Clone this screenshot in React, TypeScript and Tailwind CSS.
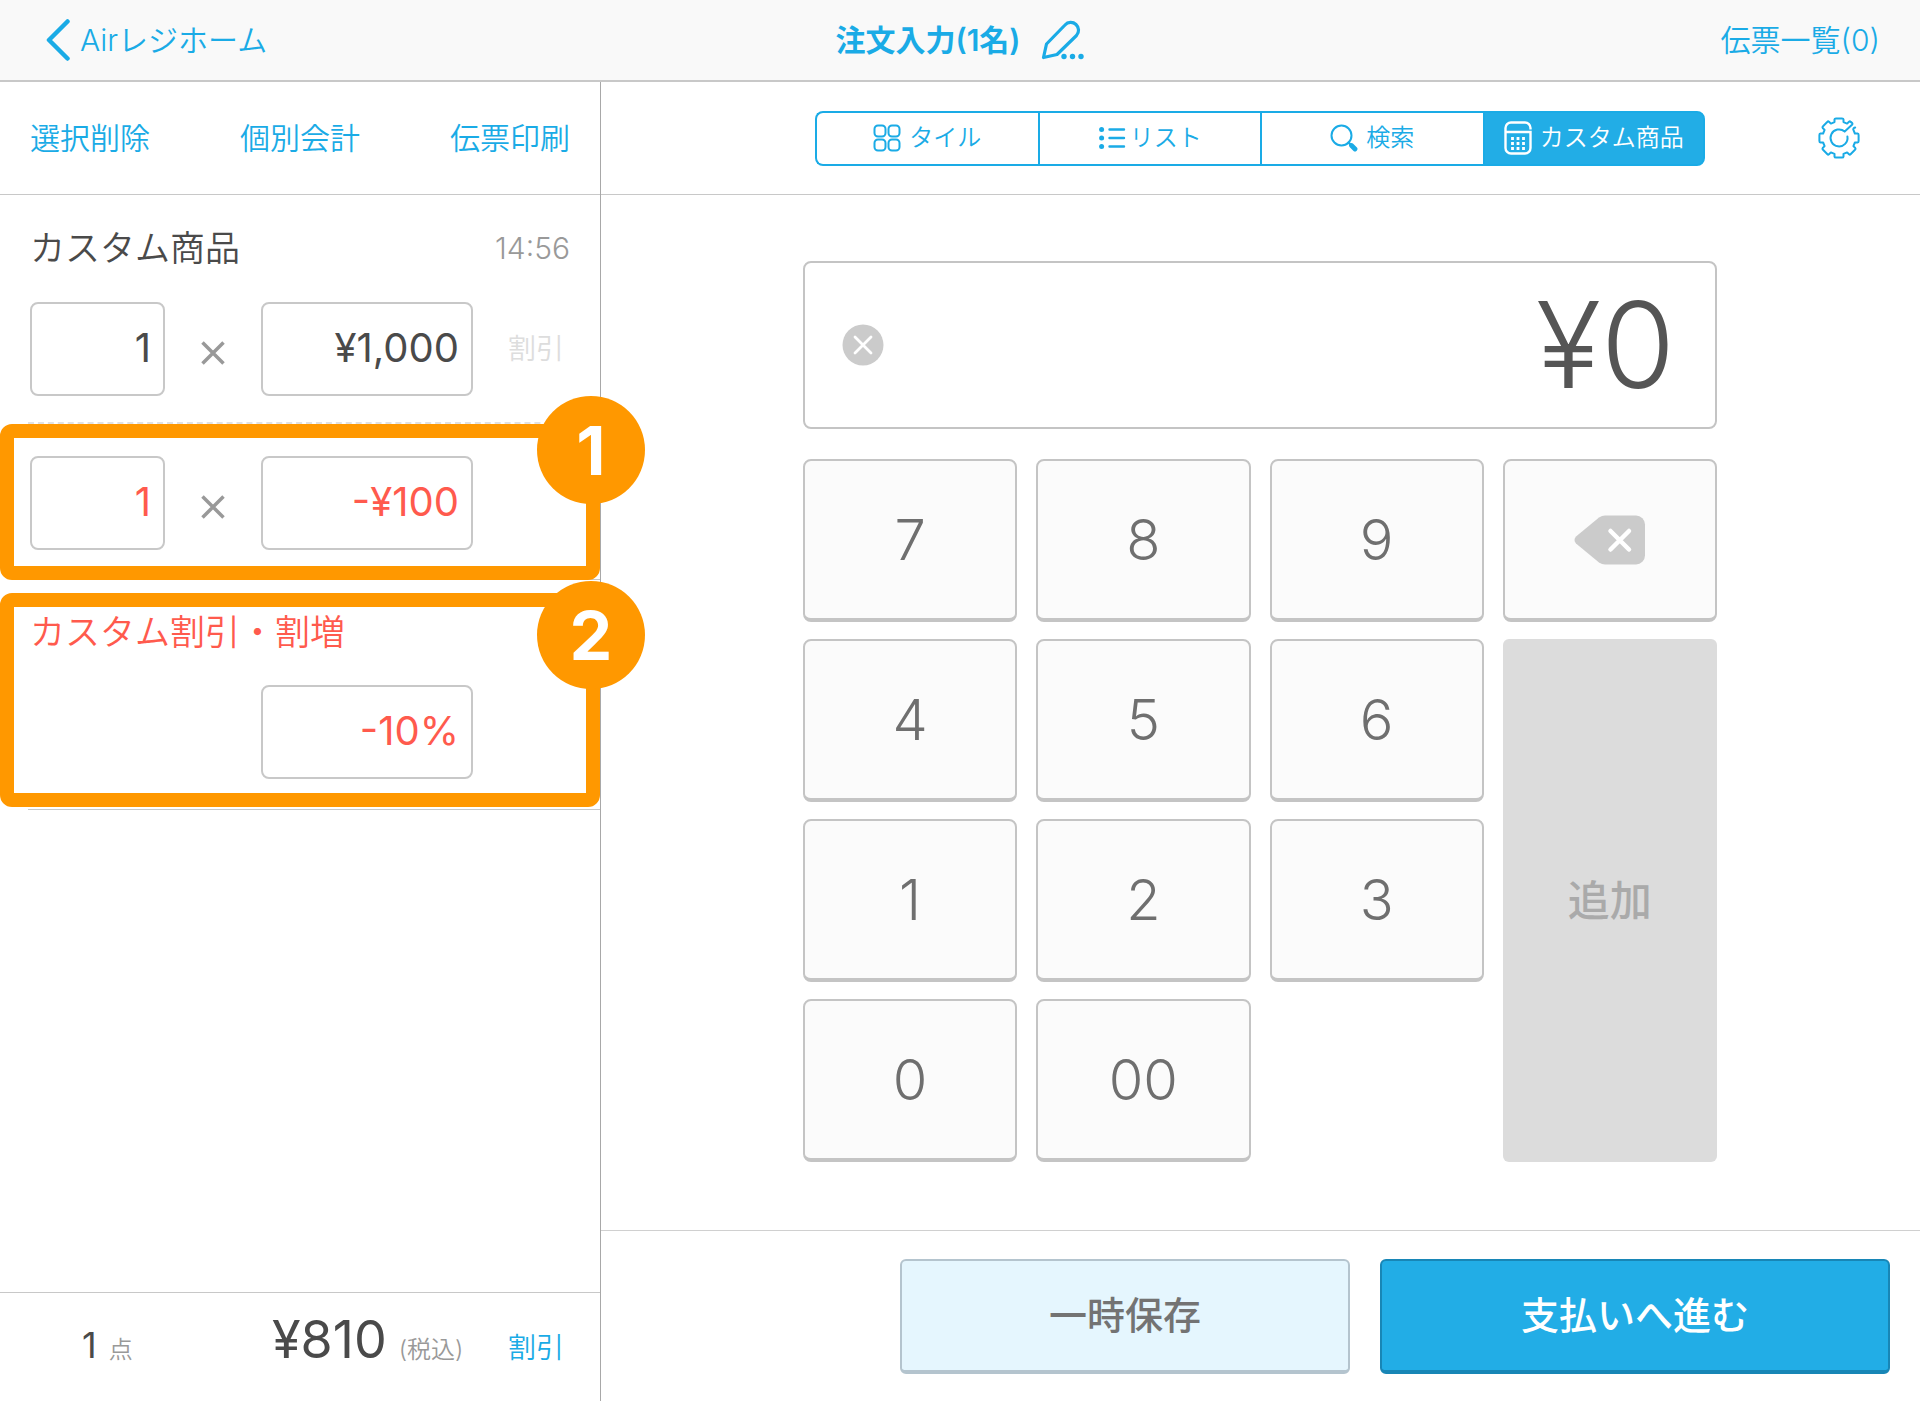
import React, { useState } from 'react';
import clsx from 'clsx';

type TabId = 'tile' | 'list' | 'search' | 'custom';

const TileIcon = () => (
  <svg className="size-7" viewBox="0 0 28 28" fill="none" stroke="currentColor" strokeWidth="2">
    <rect x="1.5" y="1.5" width="11" height="11" rx="3.5" />
    <rect x="15.5" y="1.5" width="11" height="11" rx="3.5" />
    <rect x="1.5" y="15.5" width="11" height="11" rx="3.5" />
    <rect x="15.5" y="15.5" width="11" height="11" rx="3.5" />
  </svg>
);

const ListIcon = () => (
  <svg className="size-7" viewBox="0 0 28 28" stroke="currentColor" strokeWidth="2.4" strokeLinecap="round">
    <path d="M11.500 5.500H26M11.500 14H26M11.500 22.500H26" />
    <g fill="currentColor" stroke="none">
      <circle cx="3.6" cy="5.5" r="2.5" />
      <circle cx="3.6" cy="14" r="2.5" />
      <circle cx="3.6" cy="22.5" r="2.5" />
    </g>
  </svg>
);

const SearchIcon = () => (
  <svg className="size-7" viewBox="0 0 28 28" fill="none" stroke="currentColor" strokeLinecap="round">
    <circle cx="11.5" cy="11.5" r="10" strokeWidth="2" />
    <path d="M18.500 18.500l2 2" strokeWidth="2.4" />
    <path d="M21.500 21.500l3.500 3.500" strokeWidth="4.8" />
  </svg>
);

const CalcIcon = () => (
  <svg className="h-9 w-7" viewBox="0 0 28 36" fill="none" stroke="currentColor" strokeWidth="2.4">
    <path d="M26.500 9.500V8a5.500 5.500 0 0 0-5.500-5.500H7A5.500 5.500 0 0 0 1.500 8v20A5.500 5.500 0 0 0 7 33.500h14a5.500 5.500 0 0 0 5.500-5.500V12h-25" />
    <path
      d="M8.500 18.500h.01M14 18.500h.01M19.500 18.500h.01M8.500 23.500h.01M14 23.500h.01M19.500 23.500h.01M8.500 28.500h.01M14 28.500h.01M19.500 28.500h.01"
      strokeWidth="2.800"
      strokeLinecap="square"
    />
  </svg>
);

const PencilIcon = () => (
  <svg className="h-10 w-11" viewBox="0 0 44 40" fill="none" stroke="currentColor" strokeWidth="3.2" strokeLinejoin="round">
    <path d="M2.500 37.500L5.500 24 24 5a7.600 7.600 0 0 1 11.500 10.500L16 34.500z" />
    <g fill="currentColor" stroke="none">
      <circle cx="23" cy="36.500" r="2.700" />
      <circle cx="31.500" cy="36.500" r="2.700" />
      <circle cx="40" cy="36.500" r="2.700" />
    </g>
  </svg>
);

const GearIcon = () => (
  <svg className="size-[42px]" viewBox="0 0 42 42" fill="none" stroke="currentColor" strokeWidth="2" strokeLinejoin="round" strokeLinecap="round">
    <path d="M37.200 10.500Q34.600 11.400 35.400 12.900L36.900 16.500L39.600 16.500Q40.600 16.600 40.600 18V24Q40.600 25.400 39.600 25.500L36.900 25.500L35.400 29.100L37.300 31Q38 31.900 37 32.800L32.800 37Q31.900 38 31 37.300L29.100 35.400L25.500 36.900V39.600Q25.400 40.600 24 40.600H18Q16.600 40.600 16.500 39.600V36.900L12.900 35.400L11 37.300Q10.100 38 9.200 37L5 32.800Q4 31.900 4.700 31L6.600 29.100L5.100 25.500H2.400Q1.400 25.400 1.400 24V18Q1.400 16.600 2.400 16.500H5.100L6.600 12.900L4.700 11Q4 10.100 5 9.200L9.200 5Q10.100 4 11 4.700L12.900 6.600L16.500 5.100V2.400Q16.600 1.400 18 1.400H24Q25.400 1.400 25.500 2.400V5.100L29.100 6.600L31 4.700Q31.900 4 32.800 5Q35.400 6.400 34 7.800L26.700 14.600A8.500 8.500 0 1 0 29.400 19.500" />
  </svg>
);

const TABS: { id: TabId; label: string; icon: React.ReactNode; gap: string }[] = [
  { id: 'tile', label: 'タイル', icon: <TileIcon />, gap: 'gap-2' },
  { id: 'list', label: 'リスト', icon: <ListIcon />, gap: 'gap-1' },
  { id: 'search', label: '検索', icon: <SearchIcon />, gap: 'gap-2' },
  { id: 'custom', label: 'カスタム商品', icon: <CalcIcon />, gap: 'gap-2' },
];

const Cross = () => (
  <div className="flex h-[102px] items-center justify-center text-[#999]">
    <svg className="size-6" viewBox="0 0 24 24" stroke="currentColor" strokeWidth="3.500" aria-label="×">
      <path d="M1.500 1.500l21 21M22.500 1.500l-21 21" />
    </svg>
  </div>
);

interface AmountFieldProps {
  label: string;
  value: string;
  discount?: boolean;
  className?: string;
}

const AmountField: React.FC<AmountFieldProps> = ({ label, value, discount = false, className }) => (
  <input
    type="text"
    aria-label={label}
    defaultValue={value}
    className={clsx(
      'h-[94px] w-full rounded-lg border-2 border-[#c8c8c8] bg-white pr-3 pb-1 text-right text-[40px] font-normal',
      discount ? 'text-[#ff5a4d]' : 'text-[#4a4a4a]',
      className
    )}
  />
);

interface CalloutProps {
  no: number;
  className: string;
  badgeClass: string;
}

// Cadre orange numéroté
const Callout: React.FC<CalloutProps> = ({ no, className, badgeClass }) => (
  <div className={clsx('pointer-events-none absolute left-0 w-full rounded-xl border-14 border-[#ff9800]', className)}>
    <span
      className={clsx(
        'absolute -right-[59px] flex size-[108px] items-center justify-center rounded-full bg-[#ff9800] text-[68px] font-bold text-white',
        badgeClass
      )}
    >
      {no}
    </span>
  </div>
);

const rowGrid = 'grid grid-cols-[135px_96px_212px_1fr] items-start';
const keyClass =
  'flex items-center justify-center rounded-lg border-2 border-b-4 border-[#c4c4c4] bg-[#fbfbfb] text-[56px] font-light text-[#6f6f6f]';

const App: React.FC = () => {
  const [tab, setTab] = useState<TabId>('custom');

  return (
    <div className="flex min-h-screen flex-col bg-white font-['Inter','Noto_Sans_CJK_JP',sans-serif] font-[350] text-[#4a4a4a]">
      <header className="grid h-[82px] grid-cols-[1fr_auto_1fr] items-center border-b-2 border-[#c8c8c8] bg-[#f9f9f9] text-[#1aabe6]">
        <a href="#home" className="ml-[46px] flex items-center gap-[10px] text-[30px]">
          <svg className="h-[42px] w-6" viewBox="0 0 24 42" fill="none" stroke="currentColor" strokeWidth="4.500" strokeLinecap="round" strokeLinejoin="round">
            <path d="M21.500 2.500L3 21l18.500 18.500" />
          </svg>
          Airレジホーム
        </a>
        <button type="button" className="flex items-center gap-5 text-[30px] font-semibold">
          注文入力(1名)
          <PencilIcon />
        </button>
        <a href="#slips" className="mr-10 justify-self-end text-[30px]">
          伝票一覧(0)
        </a>
      </header>

      <div className="flex flex-1">
        <aside className="relative flex w-[600px] shrink-0 flex-col shadow-[1px_0_0_#a8a8a8]">
          <div className="flex h-[113px] items-center justify-between border-b border-[#c8c8c8] px-[30px] text-[30px] text-[#1aabe6]">
            <button type="button">選択削除</button>
            <button type="button">個別会計</button>
            <button type="button">伝票印刷</button>
          </div>

          <div className="pl-7">
            <div className="flex h-[107px] items-center justify-between pr-[30px] pl-[2px]">
              <h2 className="text-[35px]">カスタム商品</h2>
              <time className="text-[30px] text-[#999]">14:56</time>
            </div>
            <div className={clsx(rowGrid, 'h-[122px] border-b-2 border-dashed border-[#e2e2e2] pl-[2px]')}>
              <AmountField label="数量" value="1" />
              <Cross />
              <AmountField label="単価" value="¥1,000" />
              <button type="button" disabled className="mr-9 h-[94px] justify-self-end text-[28px] text-[#ddd]">
                割引
              </button>
            </div>
            <div className={clsx(rowGrid, 'h-[156px] border-b border-[#c8c8c8] pt-8 pl-[2px]')}>
              <AmountField label="値引数量" value="1" discount />
              <Cross />
              <AmountField label="値引額" value="-¥100" discount />
            </div>
            <div className="h-[230px] border-b border-[#c8c8c8] pl-[2px]">
              <h2 className="flex h-[105px] items-center text-[35px] text-[#ff5a4d]">カスタム割引・割増</h2>
              <div className={rowGrid}>
                <AmountField label="割引率" value="-10%" discount className="col-start-3" />
              </div>
            </div>
          </div>

          <div className="mt-auto flex h-[109px] items-baseline border-t border-[#c8c8c8] pt-2 font-normal">
            <p className="w-[272px] pl-[82px] text-[36px]">
              1<span className="ml-3 text-[24px] font-[350] text-[#999]">点</span>
            </p>
            <p className="flex-1 text-[52px]">
              ¥810<span className="ml-3 text-[24px] font-[350] text-[#999]">(税込)</span>
            </p>
            <button type="button" className="mr-9 text-[28px] font-[350] text-[#1aabe6]">
              割引
            </button>
          </div>

          <Callout no={1} className="top-[342px] h-[156px]" badgeClass="-top-[42px]" />
          <Callout no={2} className="top-[511px] h-[214px]" badgeClass="-top-[26px]" />
        </aside>

        <main className="flex min-w-0 flex-1 flex-col">
          <div className="grid h-[113px] grid-cols-[1fr_890px_1fr] items-center border-b border-[#c8c8c8] text-[#1aabe6]">
            <div role="tablist" className="col-start-2 grid h-[55px] grid-cols-4">
              {TABS.map(({ id, label, icon, gap }) => (
                <button
                  key={id}
                  type="button"
                  role="tab"
                  aria-selected={tab === id}
                  onClick={() => setTab(id)}
                  className={clsx(
                    'flex items-center justify-center border-y-2 border-l-2 border-[#1aabe6] text-[24px] first:rounded-l-lg last:rounded-r-lg last:border-r-2',
                    gap,
                    tab === id && 'bg-[#22ade6] text-white'
                  )}
                >
                  {icon}
                  {label}
                </button>
              ))}
            </div>
            <button type="button" aria-label="設定" className="mr-[60px] justify-self-end">
              <GearIcon />
            </button>
          </div>

          <div className="mx-auto w-[914px] pt-[66px]">
            <div className="flex h-[168px] items-center justify-between rounded-lg border-2 border-[#c4c4c4] pr-10 pl-[37px]">
              <button type="button" aria-label="クリア">
                <svg className="size-[42px]" viewBox="0 0 42 42">
                  <circle cx="21" cy="21" r="20.500" fill="#cbcbcb" />
                  <path d="M13 13l16 16M29 13L13 29" stroke="#fff" strokeWidth="2.800" strokeLinecap="round" />
                </svg>
              </button>
              <output className="text-[120px] leading-none text-[#555]">¥0</output>
            </div>

            <div className="mt-[30px] grid auto-rows-[163px] grid-cols-4 gap-x-[19px] gap-y-[17px]">
              {['7', '8', '9'].map((k) => (
                <button key={k} type="button" className={keyClass}>{k}</button>
              ))}
              <button type="button" aria-label="一文字削除" className={keyClass}>
                <svg className="h-[50px] w-[72px]" viewBox="0 0 72 50">
                  <path d="M25 2.500Q28 .5 31 .5H62a9 9 0 0 1 9 9v31a9 9 0 0 1-9 9H31Q28 49.500 25 47.500L2 28.500Q-1 25 2 21.500z" fill="#cbcbcb" />
                  <path d="M36.500 16L55 34.500M55 16L36.500 34.500" stroke="#fff" strokeWidth="4.500" strokeLinecap="round" />
                </svg>
              </button>
              {['4', '5', '6'].map((k) => (
                <button key={k} type="button" className={keyClass}>{k}</button>
              ))}
              <button type="button" disabled className="row-span-3 rounded-md bg-[#dcdcdc] text-[42px] font-medium text-[#aaa]">
                追加
              </button>
              {['1', '2', '3', '0', '00'].map((k) => (
                <button key={k} type="button" className={keyClass}>{k}</button>
              ))}
            </div>
          </div>

          <div className="mt-auto flex h-[171px] justify-end gap-[30px] border-t border-[#d0d0d0] pt-7 pr-[30px] text-[38px] font-medium">
            <button type="button" className="h-[115px] w-[450px] rounded-md border-2 border-b-4 border-[#b4c4ce] bg-[#e5f6fe] text-[#737373]">
              一時保存
            </button>
            <button type="button" className="h-[115px] w-[510px] rounded-md border-2 border-b-4 border-[#1886b6] bg-[#22ade6] text-white">
              支払いへ進む
            </button>
          </div>
        </main>
      </div>
    </div>
  );
};

export default App;
